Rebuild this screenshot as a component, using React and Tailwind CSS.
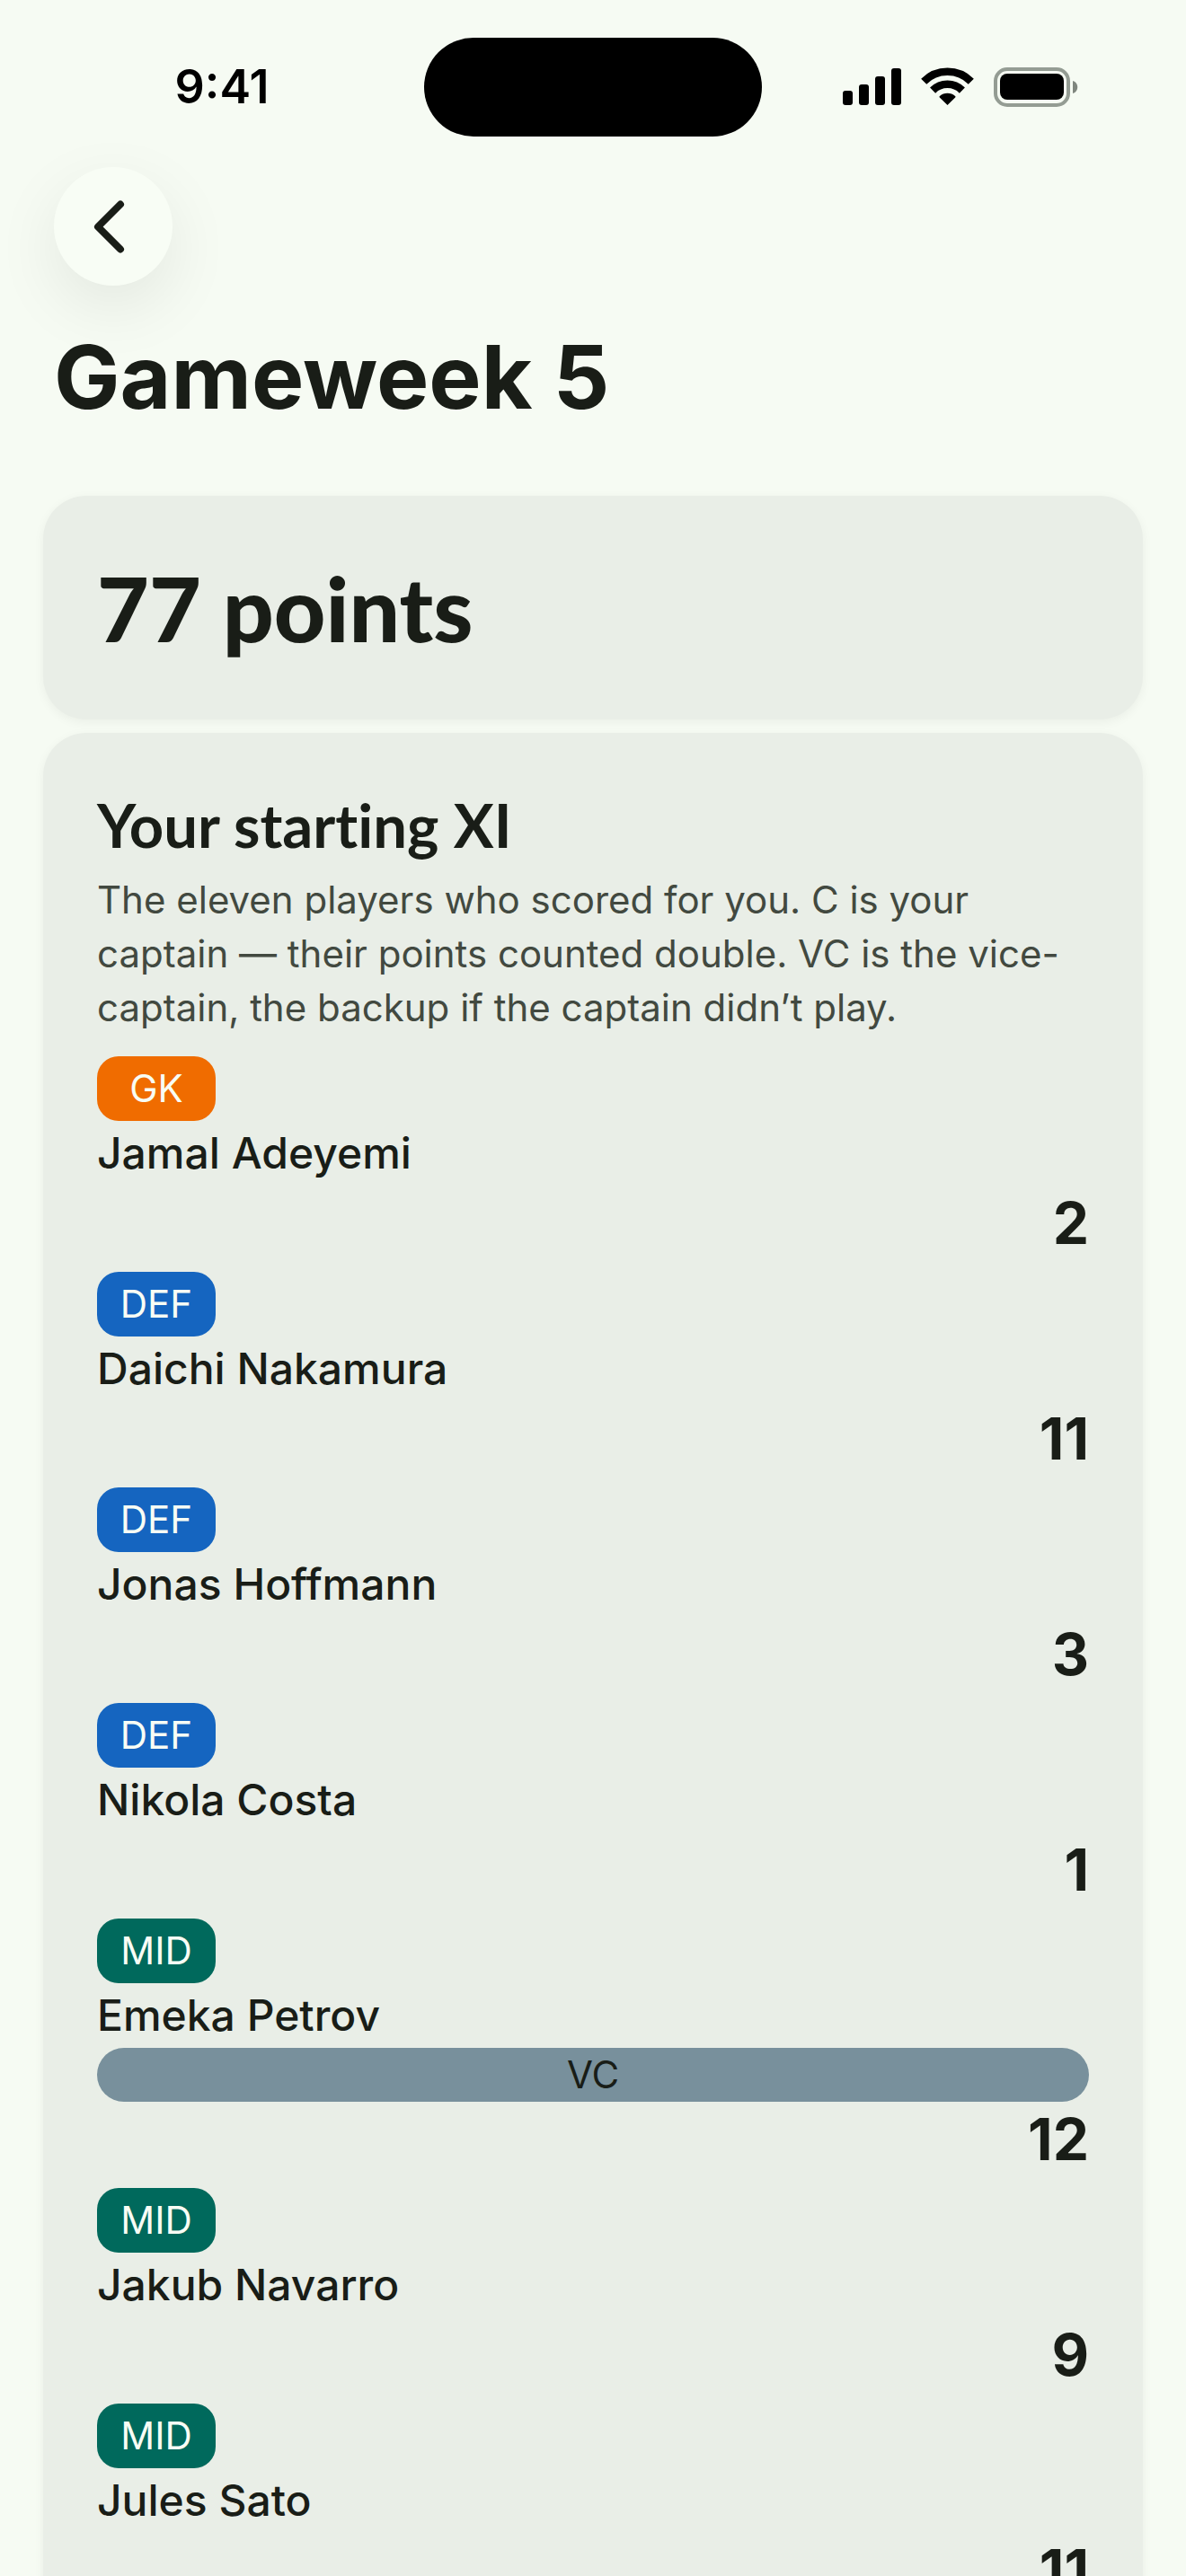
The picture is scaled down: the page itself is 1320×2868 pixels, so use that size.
const players = [
  { position: "GK", name: "Jamal Adeyemi", points: 2 },
  { position: "DEF", name: "Daichi Nakamura", points: 11 },
  { position: "DEF", name: "Jonas Hoffmann", points: 3 },
  { position: "DEF", name: "Nikola Costa", points: 1 },
  { position: "MID", name: "Emeka Petrov", points: 12, role: "VC" },
  { position: "MID", name: "Jakub Navarro", points: 9 },
  { position: "MID", name: "Jules Sato", points: 11 },
];

const badgeColors = {
  GK: "bg-[#f06c00]",
  DEF: "bg-[#1565c0]",
  MID: "bg-[#00695c]",
};

function StatusBar() {
  return (
    <header className="grid h-[186px] shrink-0 grid-cols-[1fr_376px_1fr] items-start pt-[42px] text-black">
      <div className="flex h-[110px] items-center justify-center pl-[22px] text-[52px] leading-[60px] font-semibold">
        9:41
      </div>
      <div className="h-[110px] rounded-full bg-black" />
      <div className="flex h-[110px] items-center pl-[89px]">
        <svg className="h-[44px] w-[264px]" viewBox="936 75 264 44" aria-label="Signal, Wi-Fi and battery">
          <rect x="937" y="101" width="11" height="16" rx="3" />
          <rect x="955" y="94" width="11" height="23" rx="3" />
          <rect x="973" y="85" width="11" height="32" rx="3" />
          <rect x="991" y="76" width="11" height="41" rx="3" />
          <g fill="none" stroke="currentColor" strokeWidth="8.6">
            <path d="M1027.200 90.700a37.200 37.200 0 0 1 52.600 0" />
            <path d="M1037.100 100.600a23.200 23.200 0 0 1 32.800 0" />
          </g>
          <path d="M1053.500 117l-8.700-8.500q-.8-.8.100-1.500a13 13 0 0 1 17.200 0q.9.700.1 1.500z" />
          <rect x="1107" y="77" width="81" height="40" rx="13" fill="none" stroke="#949c93" strokeWidth="4" />
          <rect x="1112" y="82" width="71" height="29" rx="8" />
          <path d="M1193 90c7 2 7 12 0 14z" fill="#7f867e" />
        </svg>
      </div>
    </header>
  );
}

function PlayerRow({ player }) {
  return (
    <li className="flex flex-col pb-3">
      <span
        className={`flex h-[72px] w-[132px] items-center justify-center rounded-3xl text-[42px] leading-[60px] text-[#f8fdf5] ${badgeColors[player.position]}`}
      >
        {player.position}
      </span>
      <span className="text-[48px] leading-[72px] font-medium">{player.name}</span>
      {player.role && (
        <span className="rounded-full bg-[#78909c] text-center text-[42px] leading-[60px]">{player.role}</span>
      )}
      <span className="text-right text-[64px] leading-[84px] font-bold">{player.points}</span>
    </li>
  );
}

export default function App() {
  return (
    <div className="flex h-screen flex-col overflow-hidden bg-[#f6fbf3] font-['Inter',sans-serif] text-[#191d17]">
      <StatusBar />
      <nav className="shrink-0 px-[60px]">
        <button
          type="button"
          aria-label="Back"
          className="flex size-[132px] items-center justify-center rounded-full bg-[#f8fdf5] shadow-[0_24px_72px_rgba(0,0,0,0.08)]"
        >
          <svg className="h-[60px] w-[60px]" viewBox="0 0 60 60" fill="none" stroke="currentColor" strokeWidth="8" strokeLinecap="round" strokeLinejoin="round" aria-hidden="true">
            <path d="M38 5.500 13 30.500 38 55.500" />
          </svg>
        </button>
      </nav>
      <h1 className="shrink-0 px-[60px] pt-[42px] pb-[72px] text-[98px] leading-[120px] font-bold">Gameweek 5</h1>
      <main className="flex flex-col gap-[15px] px-12">
        <section className="shrink-0 rounded-[48px] bg-[#e9eee7] p-[60px] shadow-[0_3px_12px_rgba(0,0,0,0.05)]">
          <p className="font-['Lato',sans-serif] text-[100px] leading-[129px] font-black">77 points</p>
        </section>
        <section className="shrink-0 rounded-[48px] bg-[#e9eee7] p-[60px] shadow-[0_3px_12px_rgba(0,0,0,0.05)]">
          <h2 className="font-['Lato',sans-serif] text-[67px] leading-[84px] font-bold [font-variant-ligatures:none]">
            Your starting XI
          </h2>
          <p className="mt-3 text-[42px] leading-[60px] text-[#424940]">
            The eleven players who scored for you. C is your captain — their points counted double. VC is the
            vice-captain, the backup if the captain didn’t play.
          </p>
          <ul className="mt-6">
            {players.map((player) => (
              <PlayerRow key={player.name} player={player} />
            ))}
          </ul>
        </section>
      </main>
    </div>
  );
}
